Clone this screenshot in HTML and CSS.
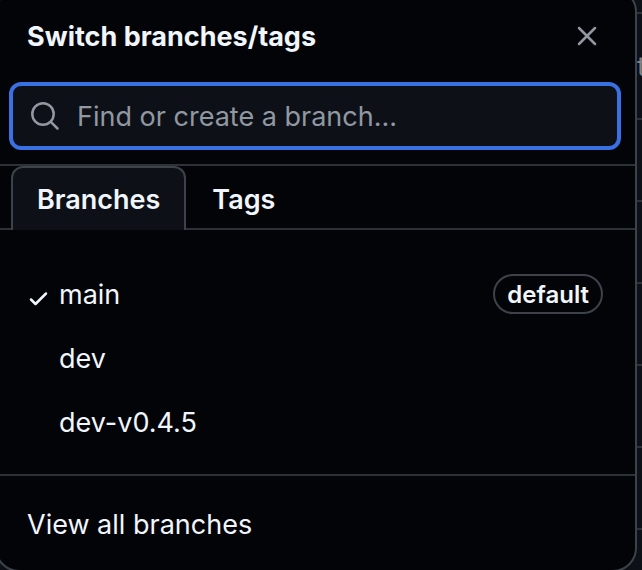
FILE: index.html
```html
<!DOCTYPE html>
<html lang="en">
<head>
  <meta charset="UTF-8" />
  <title>Switch branches/tags</title>
  <meta name="viewport" content="width=device-width, initial-scale=1.0" />
  <link rel="stylesheet" href="styles.css">
</head>
<body>
  <div class="page">
    <div class="panel">
      <header class="panel-header">
        <h1>Switch branches/tags</h1>
        <button class="close" type="button" aria-label="Close">
          <svg viewBox="0 0 20 20" width="20" height="20"><path d="M2 2l16 16M18 2L2 18" /></svg>
        </button>
      </header>

      <label class="search">
        <svg viewBox="0 0 32 32" width="32" height="32"><circle cx="14" cy="14" r="10.7" /><path d="M21.8 21.8L28.5 28.5" /></svg>
        <input type="text" aria-label="Find or create a branch" placeholder="Find or create a branch..." />
      </label>

      <div class="tabs" role="tablist">
        <button class="tab selected" type="button" role="tab" aria-selected="true">Branches</button>
        <button class="tab" type="button" role="tab" aria-selected="false">Tags</button>
      </div>

      <ul class="branches">
        <li><a href="#main">
          <svg class="check" viewBox="0 0 20 20" width="20" height="20"><path d="M3 11.5l4.5 4.5L18 5.5" /></svg>
          <span class="name">main</span>
          <span class="label">default</span>
        </a></li>
        <li><a href="#dev"><span class="name">dev</span></a></li>
        <li><a href="#dev-v0.4.5"><span class="name">dev-v0.4.5</span></a></li>
      </ul>

      <a class="view-all" href="#branches">View all branches</a>
    </div>

    <!-- file list showing behind the menu -->
    <div class="files">
      <div class="commit">t</div>
      <div class="file"></div>
      <div class="file"></div>
      <div class="file"></div>
      <div class="file"></div>
      <div class="file"></div>
      <div class="file"></div>
    </div>
  </div>
</body>
</html>
```
FILE: styles.css
```css
:root {
  --bg: #0d1117;
  --panel: #020408;
  --border: #3d424a;
  --divider: #2d3239;
  --text: #f0f6fc;
  --muted: #9198a1;
  --accent: #3970e4;
}

* {
  box-sizing: border-box;
}

body {
  margin: 0;
  height: 100vh;
  overflow: hidden;
  background: var(--bg);
  color: var(--text);
  font-family: Inter, "Liberation Sans", sans-serif;
  font-size: 27px;
  line-height: 40px;
}

svg {
  flex: none;
  fill: none;
  stroke: currentColor;
  stroke-width: 2.5;
  stroke-linecap: round;
  stroke-linejoin: round;
}

a {
  color: inherit;
  text-decoration: none;
}

button {
  padding: 0;
  border: 0;
  background: none;
  color: inherit;
  font: inherit;
}

.page {
  display: grid;
  grid-template-columns: 1fr 5px;
  align-items: start;
}

.panel {
  margin: -12px 0 0 -5px;
  background: var(--panel);
  border: 2px solid var(--border);
  border-radius: 24px;
}

.panel-header {
  display: flex;
  align-items: center;
  justify-content: space-between;
  height: 92px;
  padding: 0 32px 0 30px;
}

h1 {
  margin: 0;
  padding-top: 2px;
  font-size: 27px;
  font-weight: 700;
}

.close {
  display: grid;
  place-items: center;
  width: 32px;
  height: 32px;
  color: var(--muted);
}

.search {
  display: flex;
  align-items: center;
  gap: 16px;
  height: 68px;
  margin: 0 14px 14px 12px;
  padding: 0 16px;
  border: 4px solid var(--accent);
  border-radius: 12px;
  background: var(--bg);
  color: var(--muted);
}

.search input {
  flex: 1;
  min-width: 0;
  padding: 2px 0 0;
  border: 0;
  outline: 0;
  background: none;
  color: var(--text);
  font: inherit;
}

.search input::placeholder {
  color: var(--muted);
  opacity: 1;
}

.tabs {
  display: flex;
  height: 66px;
  padding: 0 14px;
  border-top: 2px solid var(--divider);
  box-shadow: inset 0 -2px var(--divider);
}

.tab {
  padding: 2px 24px 0;
  border: 2px solid transparent;
  border-bottom: 0;
  border-radius: 12px 12px 0 0;
  font-weight: 600;
}

.tab.selected {
  border-color: var(--border);
  background: var(--bg);
}

.branches {
  margin: 0;
  padding: 32px 0 20px;
  list-style: none;
  border-bottom: 2px solid var(--divider);
}

.branches a {
  display: grid;
  grid-template-columns: 20px 1fr auto;
  align-items: center;
  column-gap: 11px;
  height: 64px;
  padding: 0 32px 0 31px;
}

.check {
  margin-top: 8px;
}

.name {
  grid-column: 2;
  padding-top: 2px;
}

.label {
  height: 40px;
  padding: 0 12px;
  border: 2px solid var(--border);
  border-radius: 20px;
  font-size: 24px;
  font-weight: 600;
  line-height: 37px;
}

.view-all {
  display: block;
  padding: 29px 30px 25px;
}

.files {
  overflow: hidden;
  color: #7d828a;
}

.commit {
  height: 108px;
  margin-top: 12px;
  padding-top: 33px;
  border-top: 2px solid var(--divider);
  border-bottom: 2px solid var(--divider);
}

.file {
  height: 82px;
  border-bottom: 2px solid var(--divider);
}
```
